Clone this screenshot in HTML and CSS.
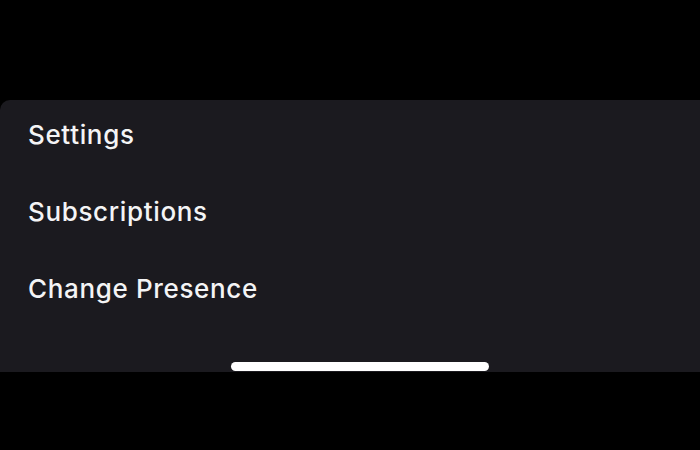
FILE: index.html
```html
<!DOCTYPE html>
<html>
<head>
<meta charset="utf-8">
<link rel="stylesheet" href="styles.css">
</head>
<body>
  <div class="screen">
    <div class="top-space"></div>
    <div class="sheet">
      <ul class="menu">
        <li class="menu-item">Settings</li>
        <li class="menu-item">Subscriptions</li>
        <li class="menu-item">Change Presence</li>
      </ul>
      <div class="home-indicator"></div>
    </div>
  </div>
</body>
</html>
```
FILE: styles.css
```css
html, body {
  margin: 0;
  padding: 0;
  background: #000;
}
.screen {
  width: 700px;
  height: 450px;
  display: flex;
  flex-direction: column;
  background: #000;
}
.top-space {
  height: 100px;
  flex: none;
}
.sheet {
  height: 272px;
  flex: none;
  background: #1b1a1f;
  border-top-left-radius: 10px;
  display: flex;
  flex-direction: column;
  padding-left: 28px;
  box-sizing: border-box;
}
.menu {
  list-style: none;
  margin: 0;
  padding: 10px 0 0;
  display: flex;
  flex-direction: column;
  gap: 27px;
}
.menu-item {
  height: 50px;
  line-height: 50px;
  font-family: Inter, "Noto Sans", sans-serif;
  font-weight: 500;
  font-size: 26px;
  letter-spacing: 0.65px;
  color: #f4f4f5;
}
.home-indicator {
  margin-top: auto;
  margin-bottom: 1px;
  margin-left: 203px;
  width: 258px;
  height: 9px;
  border-radius: 5px;
  background: #fff;
}
```
